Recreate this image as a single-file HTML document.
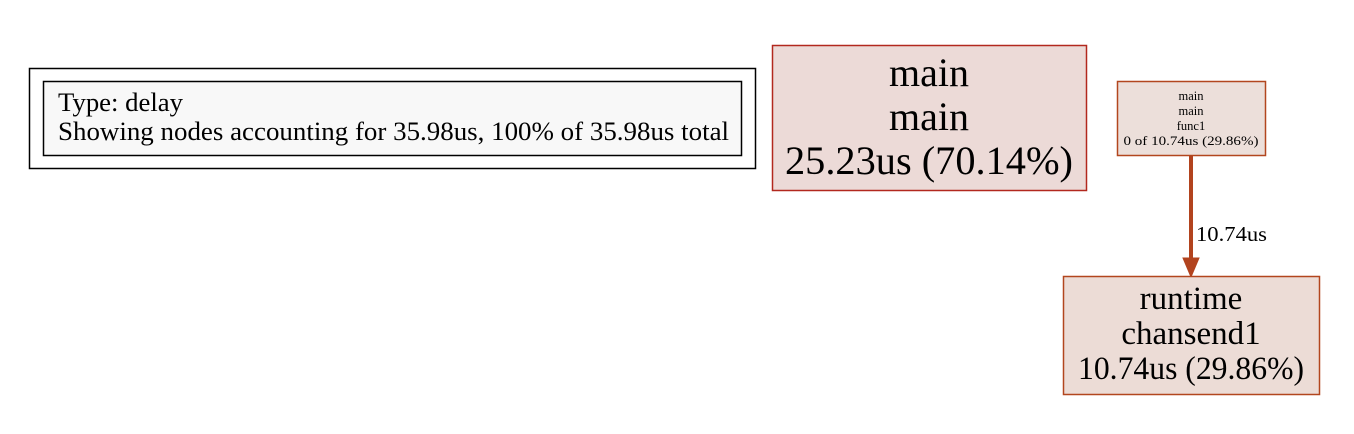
<!DOCTYPE html>
<html><head><meta charset="utf-8"><style>html,body{margin:0;padding:0;background:#fff}svg{display:block}</style></head>
<body>
<svg width="1354" height="434" viewBox="0 0 1354 434" xmlns="http://www.w3.org/2000/svg" font-family="'Liberation Serif', serif">
<rect x="29.5" y="68.5" width="726" height="100" fill="#fff" stroke="#000" stroke-width="1.5"/>
<rect x="43.5" y="81.5" width="698" height="74" fill="#f8f8f8" stroke="#000" stroke-width="1.5"/>
<text x="58" y="111" font-size="26" textLength="125" lengthAdjust="spacingAndGlyphs">Type: delay</text>
<text x="58" y="140" font-size="26" textLength="671" lengthAdjust="spacingAndGlyphs">Showing nodes accounting for 35.98us, 100% of 35.98us total</text>

<rect x="772.5" y="45.5" width="314" height="145" fill="#ecdad7" stroke="#b2281e" stroke-width="1.5"/>
<g text-anchor="middle" font-size="40">
<text x="929" y="86">main</text>
<text x="929" y="130">main</text>
<text x="929" y="174" textLength="288" lengthAdjust="spacingAndGlyphs">25.23us (70.14%)</text>
</g>

<rect x="1117.5" y="81.5" width="148" height="74" fill="#ecdfda" stroke="#b2461e" stroke-width="1.5"/>
<g text-anchor="middle" font-size="12.5">
<text x="1191" y="100">main</text>
<text x="1191" y="115">main</text>
<text x="1191" y="130">func1</text>
<text x="1191" y="145" textLength="135" lengthAdjust="spacingAndGlyphs">0 of 10.74us (29.86%)</text>
</g>

<line x1="1191" y1="156" x2="1191" y2="260" stroke="#b2431e" stroke-width="4"/>
<polygon points="1183,258 1199,258 1191,277" fill="#b2431e" stroke="#b2431e" stroke-width="1"/>
<text x="1196" y="241" font-size="21" textLength="71" lengthAdjust="spacingAndGlyphs">10.74us</text>

<rect x="1063.5" y="276.5" width="256" height="118" fill="#ecdcd6" stroke="#b2461e" stroke-width="1.5"/>
<g text-anchor="middle" font-size="33">
<text x="1191" y="309">runtime</text>
<text x="1191" y="344">chansend1</text>
<text x="1191" y="379" textLength="226" lengthAdjust="spacingAndGlyphs">10.74us (29.86%)</text>
</g>
</svg>
</body></html>
